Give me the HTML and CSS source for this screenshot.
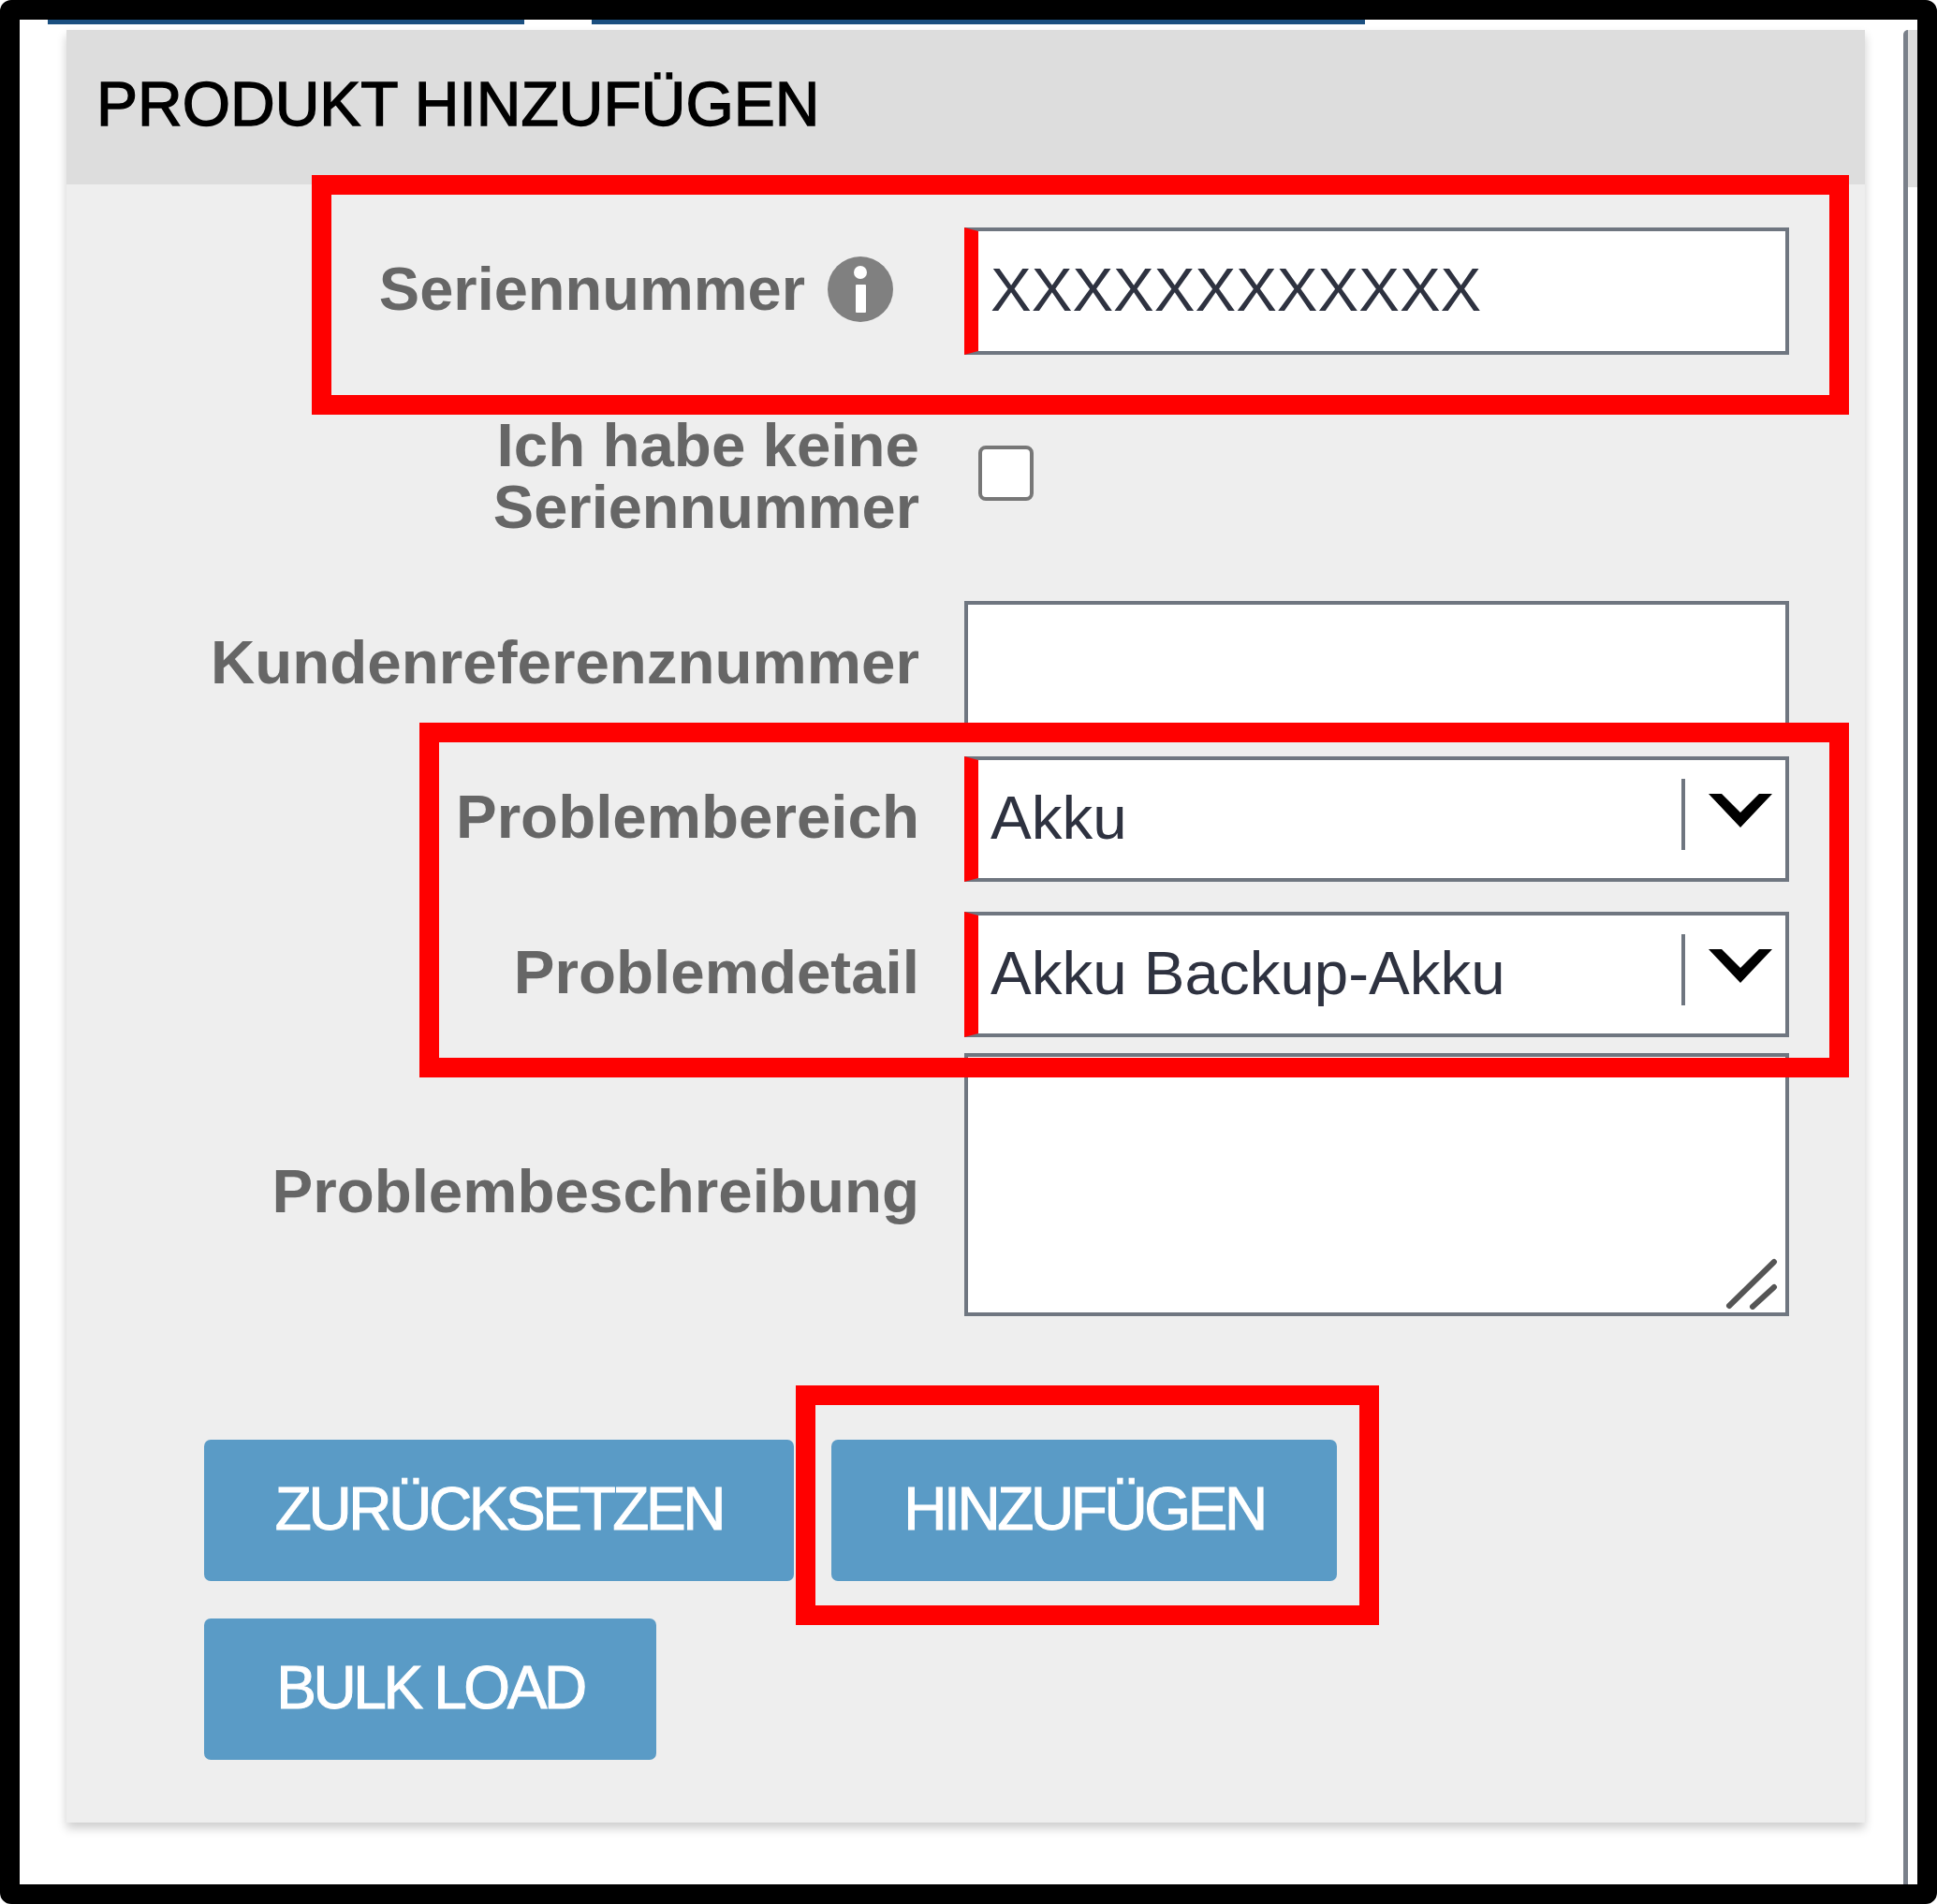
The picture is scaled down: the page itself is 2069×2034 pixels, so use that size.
FILE: index.html

```html
<!DOCTYPE html>
<html lang="de">
  <head>
    <meta charset="UTF-8" />
    <title>Produkt hinzufügen</title>
    <link rel="stylesheet" href="styles.css">
  </head>
  <body>
    <div class="frame">
      <div class="top-tabs">
        <div class="tab tab-left"></div>
        <div class="tab tab-right"></div>
      </div>

      <div class="side-panel">
        <div class="side-head"></div>
      </div>

      <div class="panel">
        <div class="panel-header">PRODUKT HINZUFÜGEN</div>

        <div class="row row-serial">
          <label class="field-label label-with-icon">
            Seriennummer
            <svg class="info-icon" viewBox="0 0 70 70">
              <circle cx="35" cy="35" r="35" fill="#808080" />
              <circle cx="35" cy="17" r="7" fill="#fff" />
              <rect x="30" y="30" width="11" height="30" rx="1" fill="#fff" />
            </svg>
          </label>
          <input class="text-input required" type="text" value="XXXXXXXXXXXX">
        </div>

        <div class="row row-check">
          <label class="field-label label-check">Ich habe keine<br><span class="label-narrow">Seriennummer</span></label>
          <div class="check-box"></div>
        </div>

        <div class="row row-ref">
          <label class="field-label">Kundenreferenznummer</label>
          <input class="text-input" type="text">
        </div>

        <div class="row row-area">
          <label class="field-label">Problembereich</label>
          <div class="select-box required">
            Akku
            <span class="select-divider"></span>
            <svg class="chevron" viewBox="0 0 73 36">
              <path d="M3 0 L17 0 L37 20 L57 0 L71 0 L37 36 Z" fill="#000" />
            </svg>
          </div>
        </div>

        <div class="row row-detail">
          <label class="field-label">Problemdetail</label>
          <div class="select-box required">
            Akku Backup-Akku
            <span class="select-divider"></span>
            <svg class="chevron" viewBox="0 0 73 36">
              <path d="M3 0 L17 0 L37 20 L57 0 L71 0 L37 36 Z" fill="#000" />
            </svg>
          </div>
        </div>

        <div class="row row-desc">
          <label class="field-label label-desc">Problembeschreibung</label>
          <div class="text-area">
            <svg class="resize-grip" viewBox="0 0 58 56">
              <path d="M5 52 L53 5 M30 53 L53 32" fill="none" stroke="#555" stroke-width="6" stroke-linecap="round" />
            </svg>
          </div>
        </div>

        <div class="button-row">
          <a href="#" class="button btn-reset">ZURÜCKSETZEN</a>
          <a href="#" class="button btn-add">HINZUFÜGEN</a>
          <a href="#" class="button btn-bulk">BULK LOAD</a>
        </div>
      </div>

      <!-- red markers laid over the screenshot -->
      <div class="marker marker-serial"></div>
      <div class="marker marker-problem"></div>
      <div class="marker marker-add"></div>
    </div>
  </body>
</html>
```

FILE: styles.css

```css
body {
  margin: 0;
  padding: 0;
  background-color: #fff;
  font-family: "Liberation Sans", Arial, sans-serif;
}

/* Outer black frame */
.frame {
  position: relative;
  box-sizing: border-box;
  width: 2069px;
  height: 2034px;
  border: 21px solid #000;
  border-radius: 12px;
  background-color: #fff;
  overflow: hidden;
}

/* Cut off tabs at the top */
.top-tabs {
  display: flex;
  gap: 72px;
  height: 5px;
  padding-left: 30px;
}

.tab {
  background-color: #1a4f80;
}

.tab-left {
  width: 509px;
}

.tab-right {
  width: 826px;
}

/* Edge of the next panel on the right */
.side-panel {
  position: absolute;
  top: 11px;
  right: 0;
  bottom: 0;
  box-sizing: border-box;
  width: 15px;
  border-left: 5px solid #7a808a;
  border-top-left-radius: 5px;
}

.side-head {
  height: 168px;
  background-color: #ddd;
}

/* Panel */
.panel {
  box-sizing: border-box;
  width: 1921px;
  height: 1915px;
  margin: 6px 0 0 50px;
  background-color: #eee;
  box-shadow: 0 6px 10px rgba(0, 0, 0, 0.2);
}

.panel-header {
  height: 165px;
  padding-left: 32px;
  line-height: 159px;
  font-size: 66px;
  color: #000;
  background-color: #ddd;
  -webkit-text-stroke: 1.4px #000;
}

.row {
  display: flex;
  align-items: center;
  gap: 48px;
}

.row-serial {
  margin-top: 46px;
}

.row-check {
  margin-top: 64px;
}

.row-ref {
  margin-top: 67px;
}

.row-area {
  margin-top: 30px;
}

.row-detail {
  margin-top: 32px;
}

.row-desc {
  margin-top: 17px;
}

.field-label {
  flex: 0 0 911px;
  box-sizing: border-box;
  padding-bottom: 5px;
  text-align: right;
  font-size: 65.5px;
  font-weight: bold;
  line-height: 66px;
  color: #666;
}

.label-with-icon {
  display: flex;
  justify-content: flex-end;
  align-items: center;
  gap: 24px;
  padding-right: 28px;
  font-size: 65px;
}

.info-icon {
  width: 70px;
  height: 70px;
}

.label-check {
  padding-bottom: 0;
}

.label-narrow {
  font-size: 65px;
}

.label-desc {
  padding-top: 15px;
  padding-bottom: 0;
}

/* Inputs */
.text-input,
.select-box {
  box-sizing: border-box;
  width: 881px;
  height: 136px;
  padding: 0 13px 4px;
  border: 4px solid #6f7680;
  background-color: #fff;
  font-family: "Liberation Sans", Arial, sans-serif;
  font-size: 65.5px;
  color: #2e3240;
}

.select-box {
  position: relative;
  display: flex;
  align-items: center;
  height: 134px;
}

.required {
  border-left: 15px solid #f00;
}

.select-divider {
  position: absolute;
  top: 20px;
  left: 751px;
  width: 4px;
  height: 76px;
  background-color: #6f7680;
}

.chevron {
  position: absolute;
  top: 36px;
  left: 777px;
  width: 73px;
  height: 36px;
}

.check-box {
  box-sizing: border-box;
  width: 59px;
  height: 59px;
  margin: -7px 0 0 15px;
  border: 4px solid #777;
  border-radius: 8px;
  background-color: #fff;
}

.text-area {
  position: relative;
  box-sizing: border-box;
  width: 881px;
  height: 281px;
  border: 4px solid #6f7680;
  background-color: #fff;
}

.resize-grip {
  position: absolute;
  right: 7px;
  bottom: 3px;
  width: 58px;
  height: 56px;
}

/* Buttons */
.button-row {
  display: flex;
  flex-wrap: wrap;
  gap: 40px 40px;
  width: 1300px;
  margin: 132px 0 0 147px;
}

.button {
  display: block;
  height: 151px;
  border-radius: 7px;
  background-color: #5a9bc6;
  color: #fff;
  font-size: 64px;
  line-height: 148px;
  letter-spacing: -3.4px;
  text-align: center;
  text-decoration: none;
  -webkit-text-stroke: 1px #fff;
}

.btn-reset {
  width: 630px;
}

.btn-add {
  width: 540px;
}

.btn-bulk {
  width: 483px;
}

/* Red markers */
.marker {
  position: absolute;
  box-sizing: border-box;
  border: 21px solid #f00;
}

.marker-serial {
  top: 166px;
  left: 312px;
  width: 1642px;
  height: 256px;
}

.marker-problem {
  top: 751px;
  left: 427px;
  width: 1527px;
  height: 379px;
}

.marker-add {
  top: 1459px;
  left: 829px;
  width: 623px;
  height: 256px;
}
```
